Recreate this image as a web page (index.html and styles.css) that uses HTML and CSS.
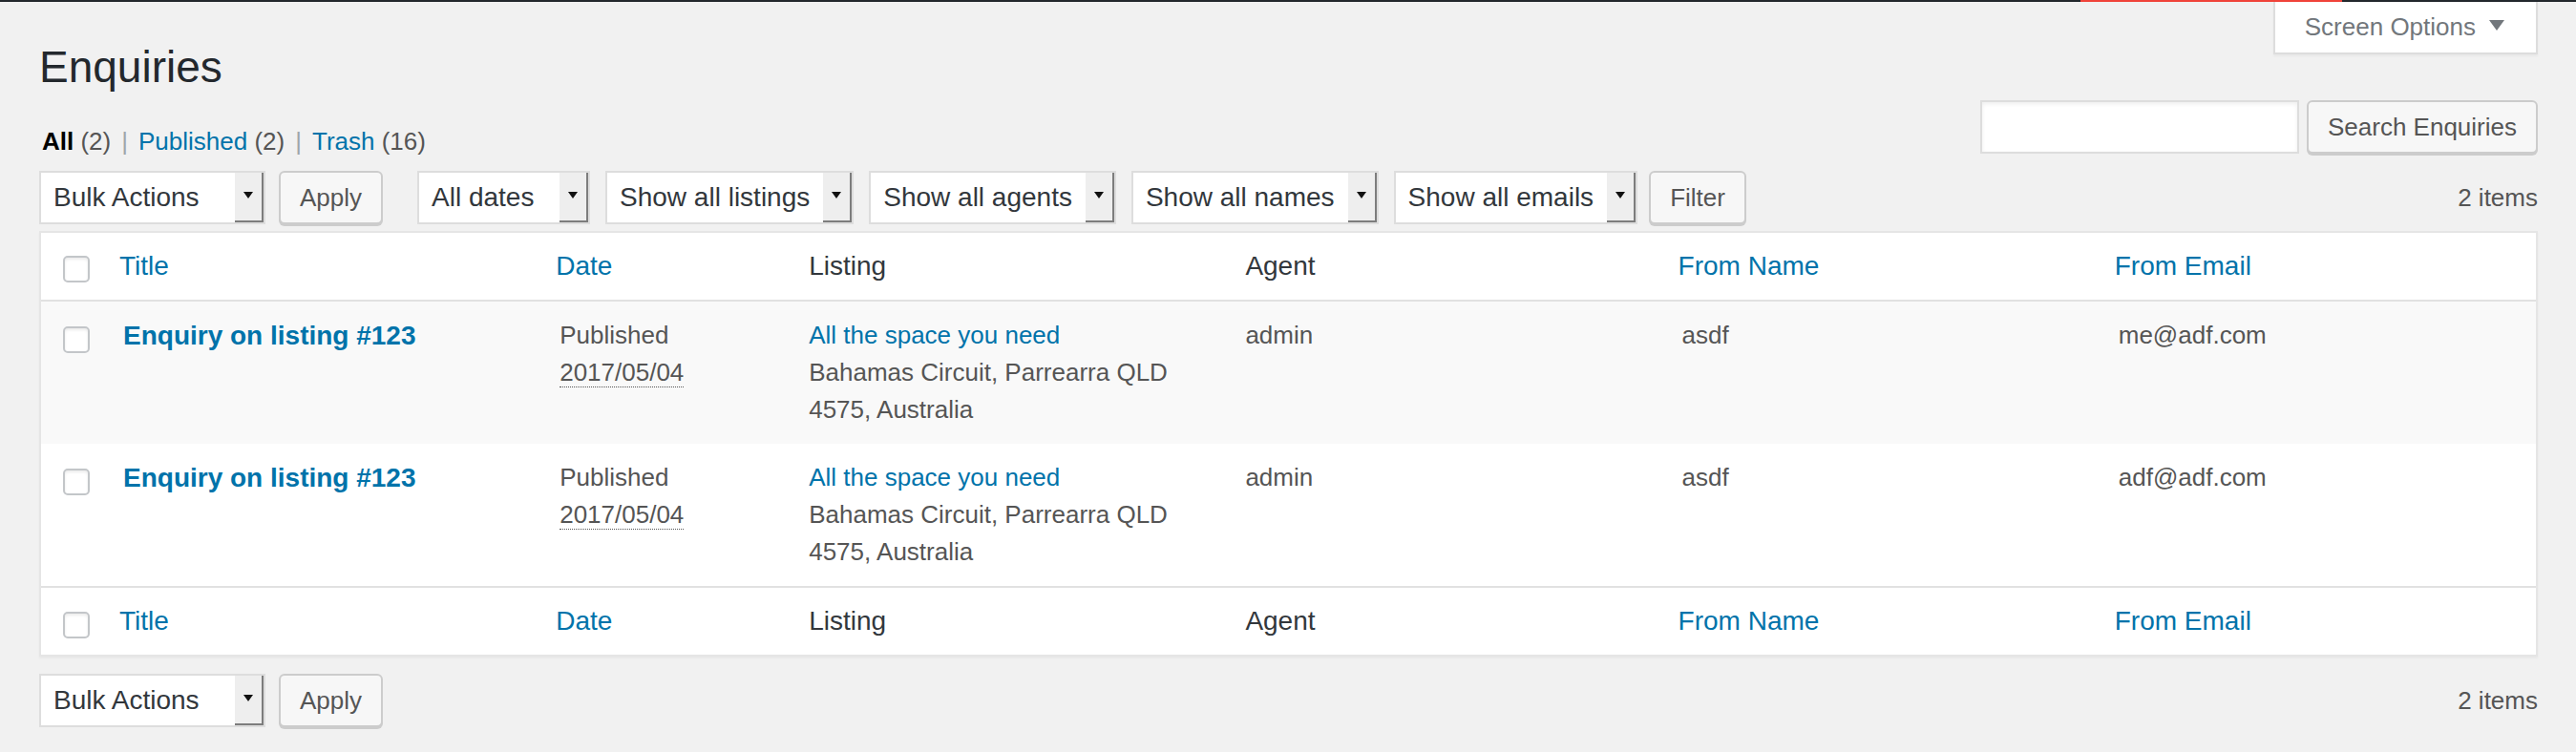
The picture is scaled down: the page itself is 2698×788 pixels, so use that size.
FILE: index.html
```html
<!DOCTYPE html>
<html lang="en">
<head>
<meta charset="utf-8">
<title>Enquiries</title>
<link rel="stylesheet" href="styles.css">
</head>
<body>
<div class="adminbar"><span class="adminbar-alert"></span></div>
<div class="wrap">
  <div class="page-head">
    <h1 class="page-title">Enquiries</h1>
    <button class="screen-options" type="button">Screen Options <span class="tri"></span></button>
  </div>

  <div class="list-top">
    <ul class="subsubsub">
      <li><a class="current">All <span class="count">(2)</span></a><span class="sep">|</span></li>
      <li><a>Published <span class="count">(2)</span></a><span class="sep">|</span></li>
      <li><a>Trash <span class="count">(16)</span></a></li>
    </ul>
    <p class="search-box">
      <input class="search-input" type="search" aria-label="Search Enquiries">
      <button class="button" type="button">Search Enquiries</button>
    </p>
  </div>

  <div class="tablenav tablenav-top">
    <div class="actions">
      <div class="select select-bulk"><span class="select-label">Bulk Actions</span><span class="select-arrow"></span></div>
      <button class="button" type="button">Apply</button>
    </div>
    <div class="actions actions-filters">
      <div class="select select-dates"><span class="select-label">All dates</span><span class="select-arrow"></span></div>
      <div class="select"><span class="select-label">Show all listings</span><span class="select-arrow"></span></div>
      <div class="select"><span class="select-label">Show all agents</span><span class="select-arrow"></span></div>
      <div class="select"><span class="select-label">Show all names</span><span class="select-arrow"></span></div>
      <div class="select"><span class="select-label">Show all emails</span><span class="select-arrow"></span></div>
      <button class="button button-filter" type="button">Filter</button>
    </div>
    <div class="displaying-num">2 items</div>
  </div>

  <table class="list-table">
    <colgroup>
      <col class="col-cb">
      <col>
      <col class="col-date">
      <col>
      <col>
      <col>
      <col>
    </colgroup>
    <thead>
      <tr>
        <th class="check-column"><input class="cb" type="checkbox" aria-label="Select all"></th>
        <th class="sortable"><a>Title</a></th>
        <th class="sortable"><a>Date</a></th>
        <th>Listing</th>
        <th>Agent</th>
        <th class="sortable"><a>From Name</a></th>
        <th class="sortable"><a>From Email</a></th>
      </tr>
    </thead>
    <tbody>
      <tr class="alt">
        <th class="check-column"><input class="cb" type="checkbox" aria-label="Select"></th>
        <td><strong><a class="row-title">Enquiry on listing #123</a></strong></td>
        <td>Published<br><abbr class="date" title="2017/05/04">2017/05/04</abbr></td>
        <td><a>All the space you need</a><br>Bahamas Circuit, Parrearra QLD 4575, Australia</td>
        <td>admin</td>
        <td>asdf</td>
        <td>me@adf.com</td>
      </tr>
      <tr>
        <th class="check-column"><input class="cb" type="checkbox" aria-label="Select"></th>
        <td><strong><a class="row-title">Enquiry on listing #123</a></strong></td>
        <td>Published<br><abbr class="date" title="2017/05/04">2017/05/04</abbr></td>
        <td><a>All the space you need</a><br>Bahamas Circuit, Parrearra QLD 4575, Australia</td>
        <td>admin</td>
        <td>asdf</td>
        <td>adf@adf.com</td>
      </tr>
    </tbody>
    <tfoot>
      <tr>
        <th class="check-column"><input class="cb" type="checkbox" aria-label="Select all"></th>
        <th class="sortable"><a>Title</a></th>
        <th class="sortable"><a>Date</a></th>
        <th>Listing</th>
        <th>Agent</th>
        <th class="sortable"><a>From Name</a></th>
        <th class="sortable"><a>From Email</a></th>
      </tr>
    </tfoot>
  </table>

  <div class="tablenav tablenav-bottom">
    <div class="actions">
      <div class="select select-bulk"><span class="select-label">Bulk Actions</span><span class="select-arrow"></span></div>
      <button class="button" type="button">Apply</button>
    </div>
    <div class="displaying-num">2 items</div>
  </div>
</div>
</body>
</html>
```

FILE: styles.css
```css
html, body {
  margin: 0;
  padding: 0;
}

body {
  background: #f1f1f1;
  font-family: "Liberation Sans", Arial, Helvetica, sans-serif;
  color: #444;
  font-size: 26px;
}

a {
  color: #0073aa;
  text-decoration: none;
  cursor: pointer;
}

/* admin bar edge */
.adminbar {
  height: 2px;
  background: #23282d;
  display: flex;
  justify-content: flex-end;
}

.adminbar-alert {
  width: 274px;
  margin-right: 245px;
  background: #f0433a;
}

.wrap {
  padding: 0 40px 0 41px;
}

/* heading row */
.page-head {
  display: flex;
  justify-content: space-between;
  align-items: flex-start;
}

.page-title {
  margin: 39px 0 0;
  font-size: 46px;
  line-height: 58px;
  font-weight: 400;
  color: #23282d;
}

.screen-options {
  display: flex;
  align-items: center;
  height: 55px;
  box-sizing: border-box;
  margin: 0;
  padding: 0 33px 0 31px;
  background: #fff;
  border: 2px solid #ddd;
  border-top: none;
  box-shadow: 0 2px 2px rgba(0, 0, 0, 0.04);
  font-family: inherit;
  font-size: 26px;
  color: #72777c;
  cursor: pointer;
}

.screen-options .tri {
  width: 0;
  height: 0;
  margin-left: 14px;
  margin-top: -4px;
  border-left: 8px solid transparent;
  border-right: 8px solid transparent;
  border-top: 11px solid #72777c;
}

/* views + search */
.list-top {
  display: flex;
  justify-content: space-between;
  align-items: flex-start;
  margin-top: 6px;
}

.subsubsub {
  list-style: none;
  margin: 17px 0 0;
  padding: 0 0 0 3px;
  display: flex;
  font-size: 26px;
  line-height: 52px;
  color: #666;
}

.subsubsub .current {
  color: #000;
  font-weight: 700;
}

.subsubsub .count {
  color: #555;
  font-weight: 400;
}

.subsubsub .sep {
  color: #a0a5aa;
  margin: 0 11px 0 11px;
}

.search-box {
  margin: 0;
  display: flex;
  gap: 8px;
}

.search-input {
  -webkit-appearance: none;
  appearance: none;
  width: 334px;
  height: 56px;
  box-sizing: border-box;
  margin: 0;
  border: 2px solid #ddd;
  background: #fff;
  box-shadow: inset 0 2px 4px rgba(0, 0, 0, 0.07);
  font-family: inherit;
  font-size: 28px;
}

/* buttons */
.button {
  height: 56px;
  box-sizing: border-box;
  margin: 0;
  padding: 0 20px;
  background: #f7f7f7;
  border: 2px solid #ccc;
  border-radius: 6px;
  box-shadow: 0 2px 0 #ccc;
  font-family: inherit;
  font-size: 26px;
  line-height: 52px;
  color: #555;
  white-space: nowrap;
  cursor: pointer;
}

/* tablenav */
.tablenav {
  display: flex;
  align-items: flex-start;
  height: 58px;
}

.tablenav-top {
  margin-top: 5px;
}

.tablenav-bottom {
  margin-top: 18px;
}

.actions {
  display: flex;
  align-items: flex-start;
  gap: 14px;
}

.actions-filters {
  margin-left: 36px;
  gap: 16px;
}

.button-filter {
  margin-left: -4px;
}

.select {
  display: flex;
  align-items: stretch;
  height: 56px;
  box-sizing: border-box;
  border: 2px solid #ddd;
  background: #fff;
  color: #32373c;
  font-size: 28px;
  cursor: default;
}

.select-bulk {
  width: 237px;
}

.select-dates {
  width: 181px;
}

.select-label {
  flex: 1 1 auto;
  display: flex;
  align-items: center;
  padding: 0 14px 0 13px;
  white-space: nowrap;
}

.select-arrow {
  flex: 0 0 30px;
  display: flex;
  align-items: center;
  justify-content: center;
  background: #eeeeee;
  box-shadow: inset -2px -2px 0 #7d7d7d;
}

.select-arrow::before {
  content: "";
  width: 0;
  height: 0;
  margin: -6px 2px 0 0;
  border-left: 5px solid transparent;
  border-right: 5px solid transparent;
  border-top: 7px solid #111;
}

.displaying-num {
  margin-left: auto;
  align-self: center;
  margin-top: -2px;
  font-size: 26px;
  color: #555;
  white-space: nowrap;
}

/* table */
.list-table {
  width: 100%;
  margin-top: 5px;
  table-layout: fixed;
  border-collapse: separate;
  border-spacing: 0;
  border: 2px solid #e5e5e5;
  background: #fff;
  box-shadow: 0 2px 2px rgba(0, 0, 0, 0.04);
}

.col-cb {
  width: 66px;
}

.col-date {
  width: 261px;
}

.list-table th,
.list-table td {
  text-align: left;
  vertical-align: top;
}

.list-table thead th,
.list-table tfoot th {
  padding: 16px 20px;
  font-size: 28px;
  line-height: 38px;
  font-weight: 400;
  color: #32373c;
}

.list-table thead th.sortable,
.list-table tfoot th.sortable {
  padding-left: 16px;
}

.list-table thead th {
  border-bottom: 2px solid #e1e1e1;
}

.list-table tfoot th {
  border-top: 2px solid #e1e1e1;
}

.list-table td {
  padding: 16px 20px;
  font-size: 26px;
  line-height: 39px;
  color: #555;
}

.list-table tbody tr.alt {
  background: #f9f9f9;
}

.list-table .check-column {
  padding: 24px 0 0 23px;
}

.list-table tbody .check-column {
  padding-top: 26px;
}

.list-table tfoot .check-column {
  padding-top: 25px;
}

.cb {
  -webkit-appearance: none;
  appearance: none;
  display: block;
  width: 28px;
  height: 28px;
  margin: 0;
  box-sizing: border-box;
  border: 2px solid #c3c6c9;
  border-radius: 5px;
  background: #fff;
  box-shadow: inset 0 2px 3px rgba(0, 0, 0, 0.08);
}

.row-title {
  font-size: 28px;
  font-weight: 700;
}

.date {
  text-decoration: none;
  border-bottom: 1px dotted #555;
}
```
